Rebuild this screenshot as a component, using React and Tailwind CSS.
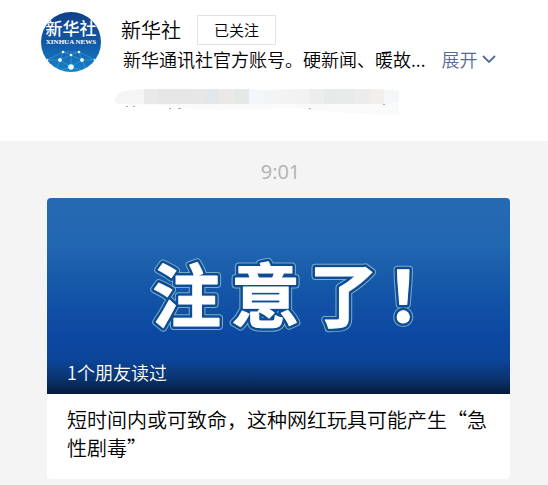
import React, { useState } from 'react'

const BANNER_CHARS = [
  { char: '注', x: 105 },
  { char: '意', x: 184 },
  { char: '了', x: 262 },
  { char: '！', x: 339 },
]

// Blurred-out line under the description: one tint per mosaic block
const MOSAIC = [
  '#e9e9e9', '#e6e6e6', '#e6e6e6', '#e7e7e7', '#e4e7ea', '#ebe9e7', '#e5e8e7', '#f4f7fa', '#f3f4f5',
  '#f3f3f3', '#f2f2f2', '#ededed', '#e8eaea', '#e9eaea', '#ececec', '#f1efee', '#f4f6f8',
]

function Avatar() {
  const nodes = [[22, 40], [38, 40], [19, 48], [30, 43], [41, 48], [6, 48], [54, 48], [30, 55]]
  return (
    <svg viewBox="0 0 60 60" className="w-15 h-15 shrink-0" role="img" aria-label="新华社">
      <defs>
        <linearGradient id="avatar-bg" x1="0" y1="0" x2="0" y2="1">
          <stop offset="0" stopColor="#124089"/>
          <stop offset="0.5" stopColor="#1357a5"/>
          <stop offset="1" stopColor="#1583c8"/>
        </linearGradient>
        <clipPath id="avatar-clip"><circle cx="30" cy="30" r="30"/></clipPath>
      </defs>
      <g clipPath="url(#avatar-clip)">
        <rect width="60" height="60" fill="url(#avatar-bg)"/>
        <path d="M0 54 6 48 22 40 30 43 38 40 54 48 60 54M22 40H38M6 48H19L30 43 41 48H54M22 40 19 48 30 55 41 48 38 40M6 48 14 60 30 55 46 60 54 48M19 48 14 60M41 48 46 60M30 43V55"
          fill="none" stroke="#75c4e3" strokeWidth="0.5" opacity="0.7"/>
        {nodes.map(([cx, cy], i) => (
          <circle key={i} cx={cx} cy={cy} r={i === 7 ? 2.8 : i === 2 || i === 4 ? 1.9 : 1.3} fill="#e9fbff"/>
        ))}
        <text x="30" y="23" textAnchor="middle" fill="#fff" className="text-[17px] font-medium font-['Noto_Sans_CJK_SC',sans-serif]">新华社</text>
        <text x="30" y="32" textAnchor="middle" fill="#fff" className="text-[7px] font-bold font-['Liberation_Serif',serif]">XINHUA NEWS</text>
      </g>
    </svg>
  )
}

function BannerTitle() {
  const layers = [
    { fill: '#79adc0', stroke: '#79adc0', strokeWidth: 8 },
    { fill: '#0e4c97', stroke: '#0e4c97', strokeWidth: 6 },
    { fill: '#fff', stroke: '#fff', strokeWidth: 1 },
  ]
  return (
    <svg viewBox="0 0 463 196" className="block w-full" role="img" aria-label="注意了！">
      <defs>
        <linearGradient id="banner-bg" x1="0" y1="0" x2="0" y2="1">
          <stop offset="0" stopColor="#256ab1"/>
          <stop offset="0.25" stopColor="#2166b1"/>
          <stop offset="0.45" stopColor="#1557a8"/>
          <stop offset="0.7" stopColor="#0c48a2"/>
          <stop offset="0.82" stopColor="#0c469b"/>
          <stop offset="0.92" stopColor="#0a3470"/>
          <stop offset="1" stopColor="#051b3c"/>
        </linearGradient>
      </defs>
      <rect width="463" height="196" fill="url(#banner-bg)"/>
      {layers.map((layer, i) => (
        <g key={i} {...layer} strokeLinejoin="round" aria-hidden={i > 0} className="text-[69px] font-bold font-['Noto_Sans_CJK_SC',sans-serif]">
          {BANNER_CHARS.map(c => <text key={c.char} x={c.x} y="124">{c.char}</text>)}
        </g>
      ))}
    </svg>
  )
}

function Mosaic() {
  return (
    <svg viewBox="0 0 285 26" className="block ml-[-7px] mt-4 w-[285px] h-[26px]" aria-hidden="true">
      <defs>
        <clipPath id="smudge">
          <path d="M1 10Q3 3 10 2L20 1Q25 0 30 0H134L150 1L190 0H268L285 2V26H268L205 22L175 18L150 20L100 21L70 19L45 16L4 15Q-1 13 1 10Z"/>
        </clipPath>
      </defs>
      <g clipPath="url(#smudge)">
        <rect width="285" height="26" fill="#fafafa"/>
        <rect width="30" height="15" fill="#f5f5f5"/>
        {MOSAIC.map((fill, i) => <rect key={i} x={i * 15 + 30} width="15" height="15" fill={fill}/>)}
      </g>
      <path d="M272 15Q284 15 285 12V15Z" fill="#fff"/>
      <path d="M12 17.5h2M19 17.5h2M55 19.5h2M64 19.5h3M195 19.5h2M269 15.5h2" stroke="#aaa" strokeWidth="1"/>
    </svg>
  )
}

export default function App() {
  const [followed, setFollowed] = useState(true)
  const [expanded, setExpanded] = useState(false)

  return (
    <div className="min-h-screen bg-[#f4f4f4] pb-1.5 font-[350] text-black font-['Noto_Sans_CJK_SC',sans-serif]" lang="zh-CN">
      <header className="flex gap-5 bg-white pl-[41px] pr-8 pt-3 pb-[26px]">
        <Avatar/>
        <div className="min-w-0 flex-1">
          <div className="flex items-center gap-4 mt-[3px]">
            <h1 className="text-[20px] leading-[30px] font-[350]">新华社</h1>
            <button onClick={() => setFollowed(!followed)}
              className="w-[79px] h-[30px] border border-[#e2e2e2] text-[15px] leading-7">
              {followed ? '已关注' : '关注'}
            </button>
          </div>
          <div className="flex items-center gap-4 pl-0.5 text-[18px] leading-7">
            <p className={expanded ? '' : 'truncate'}>新华通讯社官方账号。硬新闻、暖故...</p>
            <button onClick={() => setExpanded(!expanded)} aria-expanded={expanded}
              className="flex shrink-0 items-center gap-1 text-[#576b95]">
              展开
              <svg viewBox="0 0 14 8" className="w-3.5 h-2" fill="none" stroke="currentColor" strokeWidth="1.8">
                <path d="M1 1 7 7 13 1"/>
              </svg>
            </button>
          </div>
          <Mosaic/>
        </div>
      </header>

      <main className="pl-[47px] pr-[38px] pt-[18px]">
        <time className="block pl-1 text-center text-[20px] leading-[26px] text-[#b2b2b2] font-normal font-['Open_Sans',sans-serif]">9:01</time>
        <a href="#article" className="mt-[13px] block overflow-hidden rounded-sm bg-white">
          <div className="relative">
            <BannerTitle/>
            <span className="absolute left-5 bottom-2 text-[18px] leading-7 text-white">1个朋友读过</span>
          </div>
          <h2 className="px-5 pt-3 pb-[17px] text-[20px] leading-7 font-[350]">短时间内或可致命，这种网红玩具可能产生“急性剧毒”</h2>
        </a>
      </main>
    </div>
  )
}
